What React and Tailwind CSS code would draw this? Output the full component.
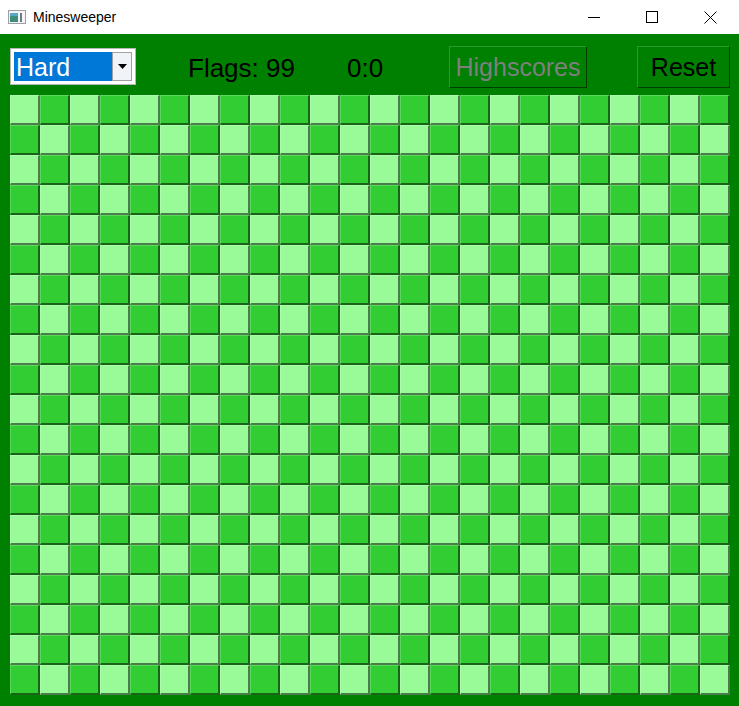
import React from 'react';

const ROWS = 20;
const COLS = 24;

const Cell = ({ light }) => (
  <div
    className={`w-[30px] h-[30px] box-border border-t border-l border-b-2 border-r-2 border-t-white/20 border-l-white/20 border-b-black/50 border-r-black/50 ${
      light ? 'bg-[#98fb98]' : 'bg-[#32cd32]'
    }`}
  />
);

const App = () => {
  const cells = [];
  for (let r = 0; r < ROWS; r++) {
    for (let c = 0; c < COLS; c++) {
      cells.push(<Cell key={`${r}-${c}`} light={(r + c) % 2 === 0} />);
    }
  }

  return (
    <div className="w-[739px] h-[706px] flex flex-col font-['Liberation_Sans',Arial,sans-serif] overflow-hidden">
      {/* Title bar */}
      <div className="h-[34px] bg-white flex items-center shrink-0">
        <svg width="18" height="14" viewBox="0 0 18 14" className="ml-[8px]">
          <rect x="0.5" y="0.5" width="17" height="13" fill="#f4f4f4" stroke="#9aa0a6" />
          <rect x="2" y="3" width="8" height="9" fill="#3c8d7a" />
          <rect x="2" y="3" width="8" height="3" fill="#5aa8c8" />
          <rect x="12" y="3" width="2" height="9" fill="#6b7b8c" />
        </svg>
        <span className="ml-[7px] text-[14px] text-black">Minesweeper</span>
        <div className="ml-auto flex h-full">
          <div className="w-[58px] h-full flex items-center justify-center">
            <div className="w-[12px] h-px bg-black" />
          </div>
          <div className="w-[58px] h-full flex items-center justify-center">
            <div className="w-[12px] h-[12px] border border-black" />
          </div>
          <div className="w-[58px] h-full flex items-center justify-center">
            <svg width="13" height="13" viewBox="0 0 13 13">
              <path d="M0.5 0.5 L12.5 12.5 M12.5 0.5 L0.5 12.5" stroke="black" strokeWidth="1" />
            </svg>
          </div>
        </div>
      </div>

      {/* Game area */}
      <div className="flex-1 bg-[#008000] flex flex-col">
        <div className="h-[61px] pt-[4px] box-border flex items-center shrink-0">
          <div className="ml-[10px] w-[126px] h-[37px] box-border border border-[#b8b8b8] bg-white p-[3px] flex">
            <div className="flex-1 bg-[#0078d7] text-white text-[25px] leading-none flex items-center pl-[2px] pt-[2px]">
              Hard
            </div>
            <div className="w-[20px] box-border border border-[#a0a0a0] bg-[#f0f4f9] flex items-center justify-center">
              <svg width="9" height="5" viewBox="0 0 9 5">
                <path d="M0 0 L9 0 L4.5 5 Z" fill="black" />
              </svg>
            </div>
          </div>
          <div className="ml-[52px] w-[159px] mt-[2px] text-[26px] text-black leading-none">Flags: 99</div>
          <div className="w-[102px] mt-[2px] text-[26px] text-black leading-none">0:0</div>
          <button className="w-[138px] h-[42px] box-border border border-t-[#2a9a2a] border-l-[#2a9a2a] border-b-[#003c00] border-r-[#003c00] bg-[#008000] text-[25px] text-[#7f7f7f] leading-none pt-[2px]">
            Highscores
          </button>
          <button className="ml-[50px] w-[93px] h-[42px] box-border border border-t-[#2a9a2a] border-l-[#2a9a2a] border-b-[#003c00] border-r-[#003c00] bg-[#008000] text-[25px] text-black leading-none pt-[2px]">
            Reset
          </button>
        </div>

        <div className="ml-[10px] grid grid-cols-[repeat(24,30px)] grid-rows-[repeat(20,30px)] w-[720px]">
          {cells}
        </div>
      </div>
    </div>
  );
};

export default App;
